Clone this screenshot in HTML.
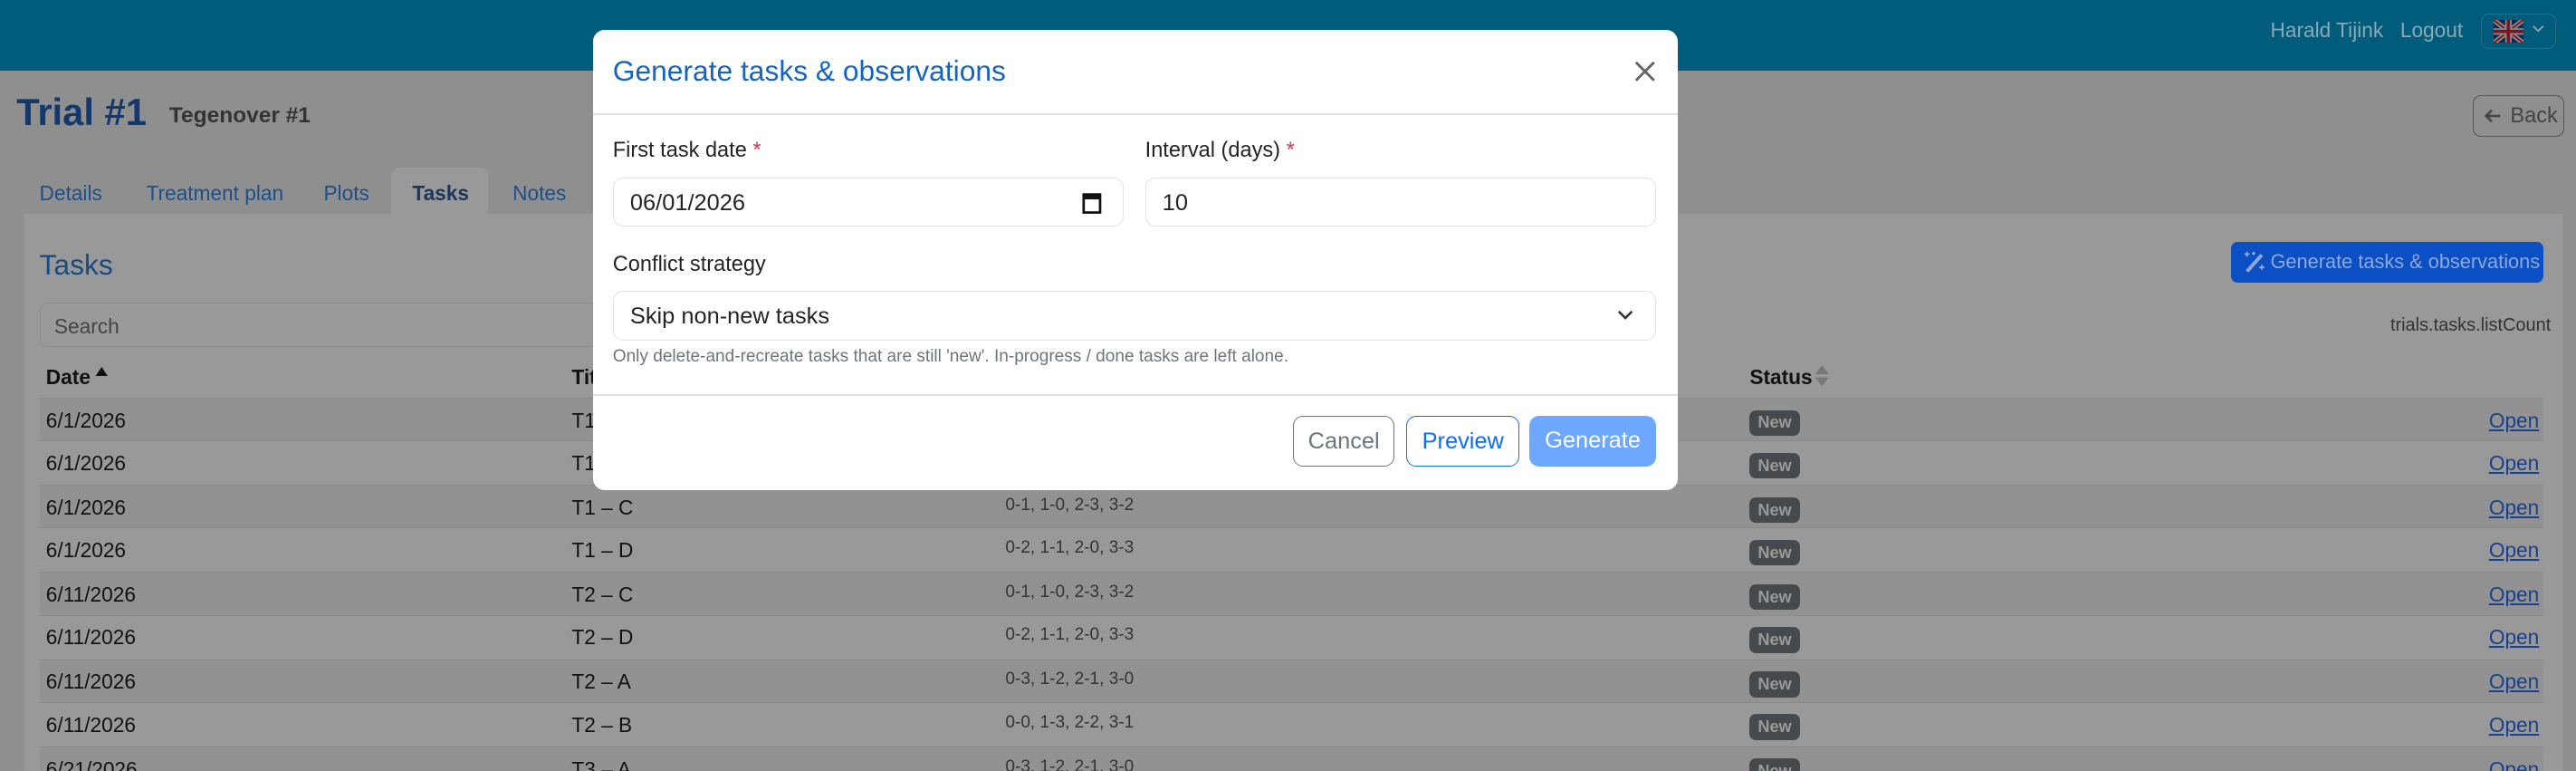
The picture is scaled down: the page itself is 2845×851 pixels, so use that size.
<!DOCTYPE html>
<html><head><meta charset="utf-8"><style>
html,body{margin:0;padding:0;overflow:hidden;background:#8f8f8f;width:2845px;height:851px}
#w{position:relative;width:1568px;height:469px;zoom:1.81441;font-family:"Liberation Sans",sans-serif;color:#111;overflow:hidden;background:#8f8f8f}
.a{position:absolute;white-space:nowrap}
.nav{left:0;top:0;width:1568px;height:43px;background:#005c7b}
.card{left:15px;top:130px;width:1545px;height:339px;background:#999}
.row{position:absolute;left:24px;width:1524px;height:26px;border-top:1px solid #8a8a8a;font-size:12.5px;overflow:hidden}
.row.d{background:#929292}
.row span{position:absolute;top:6px}
.badge{background:#454a4f;color:#999;font-size:10px;font-weight:bold;padding:2px 5px;border-radius:4px;top:7px!important}
.open{color:#1a3f8c;text-decoration:underline}
.m{left:361px;top:18px;width:660px;height:280px;background:#fff;border-radius:7px}
.inp{position:absolute;border:1px solid #dee2e6;border-radius:6px;height:30px;background:#fff;font-size:14px;color:#212529;box-sizing:border-box}
.lbl{position:absolute;font-size:13px;color:#212529}
.req{color:#dc3545}
.btn{position:absolute;top:235px;height:31px;border-radius:6px;font-size:14px;line-height:30px;text-align:center;box-sizing:border-box}
</style></head><body><div id="w">
<div class="a nav"></div>
<div class="a" style="left:1382px;top:11px;font-size:12.5px;color:#8aa9b6">Harald Tijink</div>
<div class="a" style="left:1461px;top:11px;font-size:12.5px;color:#8aa9b6">Logout</div>
<div class="a" style="left:1510px;top:8px;width:46px;height:22px;border:1px solid #2a6f88;border-radius:5px;box-sizing:border-box"></div>
<svg class="a" style="left:1518px;top:12px" width="18" height="14" viewBox="0 0 18 14"><rect width="18" height="14" fill="#0e2455"/><path d="M0 0L18 14M18 0L0 14" stroke="#888" stroke-width="3"/><path d="M0 0L18 14M18 0L0 14" stroke="#7a1520" stroke-width="1"/><path d="M9 0V14M0 7H18" stroke="#888" stroke-width="4"/><path d="M9 0V14M0 7H18" stroke="#7a1520" stroke-width="2"/></svg>
<svg class="a" style="left:1541px;top:15px" width="8" height="6" viewBox="0 0 8 6"><path d="M1 1L4 4L7 1" fill="none" stroke="#8aa9b6" stroke-width="1"/></svg>

<div class="a" style="left:10px;top:55px;font-size:23px;font-weight:bold;color:#12386e">Trial #1</div>
<div class="a" style="left:103px;top:63px;font-size:13.5px;font-weight:bold;color:#333">Tegenover #1</div>
<div class="a" style="left:1505px;top:58px;width:56px;height:25px;border:1px solid #555;border-radius:5px;box-sizing:border-box"></div>
<svg class="a" style="left:1512px;top:65px" width="11" height="11" viewBox="0 0 11 11"><path d="M10 5.5H1.5M5 2L1.5 5.5L5 9" fill="none" stroke="#444" stroke-width="1.4"/></svg>
<div class="a" style="left:1528px;top:63px;font-size:13px;color:#444">Back</div>
<div class="a" style="left:24px;top:110px;font-size:12.5px;color:#1d4e8a">Details</div>
<div class="a" style="left:89px;top:110px;font-size:12.5px;color:#1d4e8a">Treatment plan</div>
<div class="a" style="left:197px;top:110px;font-size:12.5px;color:#1d4e8a">Plots</div>
<div class="a" style="left:238px;top:102px;width:59px;height:30px;background:#999;border-radius:5px 5px 0 0"></div>
<div class="a" style="left:251px;top:110px;font-size:12.5px;font-weight:bold;color:#1a3659">Tasks</div>
<div class="a" style="left:312px;top:110px;font-size:12.5px;color:#1d4e8a">Notes</div>
<div class="a card"></div>
<div class="a" style="left:24px;top:151px;font-size:17.5px;color:#174b82">Tasks</div>
<div class="a" style="left:1358px;top:147px;width:190px;height:25px;background:#0b4fc5;border-radius:4px"></div>
<svg class="a" style="left:1366px;top:152px" width="13" height="14" viewBox="0 0 13 14"><path d="M2 13L11 3" stroke="#8fa8d8" stroke-width="2.2"/><path d="M2 1v3M0.5 2.5h3M11 9v3M9.5 10.5h3M6 1v2M5 2h2" stroke="#8fa8d8" stroke-width="1"/></svg>
<div class="a" style="left:1382px;top:152px;font-size:12px;color:#8fa8d8">Generate tasks &amp; observations</div>
<div class="a" style="left:24px;top:184px;width:500px;height:27px;border:1px solid #8c8c8c;border-radius:5px;box-sizing:border-box;background:#9a9a9a"></div>
<div class="a" style="left:33px;top:191px;font-size:12.5px;color:#444">Search</div>
<div class="a" style="left:1455px;top:192px;font-size:11px;color:#333">trials.tasks.listCount</div>
<div class="a" style="left:28px;top:222px;font-size:12.5px;font-weight:bold">Date</div>
<svg class="a" style="left:58px;top:223px" width="8" height="6" viewBox="0 0 8 6"><path d="M0 6L4 0L8 6Z" fill="#111"/></svg>
<div class="a" style="left:348px;top:222px;font-size:12.5px;font-weight:bold">Title</div>
<div class="a" style="left:1065px;top:222px;font-size:12.5px;font-weight:bold">Status</div>
<svg class="a" style="left:1105px;top:222px" width="8" height="13" viewBox="0 0 8 13"><path d="M0 5.5L4 0L8 5.5ZM0 7.5L4 13L8 7.5Z" fill="#777"/></svg>

<div class="row d" style="top:242px"><span style="left:4px">6/1/2026</span><span style="left:324px">T1 – A</span><span style="left:588px;font-size:10.5px;color:#333">0-3, 1-2, 2-1, 3-0</span><span class="badge" style="left:1041px">New</span><span class="open" style="left:1491px">Open</span></div>
<div class="row" style="top:268px"><span style="left:4px">6/1/2026</span><span style="left:324px">T1 – B</span><span style="left:588px;font-size:10.5px;color:#333">0-0, 1-3, 2-2, 3-1</span><span class="badge" style="left:1041px">New</span><span class="open" style="left:1491px">Open</span></div>
<div class="row d" style="top:295px"><span style="left:4px">6/1/2026</span><span style="left:324px">T1 – C</span><span style="left:588px;font-size:10.5px;color:#333">0-1, 1-0, 2-3, 3-2</span><span class="badge" style="left:1041px">New</span><span class="open" style="left:1491px">Open</span></div>
<div class="row" style="top:321px"><span style="left:4px">6/1/2026</span><span style="left:324px">T1 – D</span><span style="left:588px;font-size:10.5px;color:#333">0-2, 1-1, 2-0, 3-3</span><span class="badge" style="left:1041px">New</span><span class="open" style="left:1491px">Open</span></div>
<div class="row d" style="top:348px"><span style="left:4px">6/11/2026</span><span style="left:324px">T2 – C</span><span style="left:588px;font-size:10.5px;color:#333">0-1, 1-0, 2-3, 3-2</span><span class="badge" style="left:1041px">New</span><span class="open" style="left:1491px">Open</span></div>
<div class="row" style="top:374px"><span style="left:4px">6/11/2026</span><span style="left:324px">T2 – D</span><span style="left:588px;font-size:10.5px;color:#333">0-2, 1-1, 2-0, 3-3</span><span class="badge" style="left:1041px">New</span><span class="open" style="left:1491px">Open</span></div>
<div class="row d" style="top:401px"><span style="left:4px">6/11/2026</span><span style="left:324px">T2 – A</span><span style="left:588px;font-size:10.5px;color:#333">0-3, 1-2, 2-1, 3-0</span><span class="badge" style="left:1041px">New</span><span class="open" style="left:1491px">Open</span></div>
<div class="row" style="top:427px"><span style="left:4px">6/11/2026</span><span style="left:324px">T2 – B</span><span style="left:588px;font-size:10.5px;color:#333">0-0, 1-3, 2-2, 3-1</span><span class="badge" style="left:1041px">New</span><span class="open" style="left:1491px">Open</span></div>
<div class="row d" style="top:454px;height:15px"><span style="left:4px">6/21/2026</span><span style="left:324px">T3 – A</span><span style="left:588px;font-size:10.5px;color:#333">0-3, 1-2, 2-1, 3-0</span><span class="badge" style="left:1041px">New</span><span class="open" style="left:1491px">Open</span></div>

<div class="a m">
 <div class="a" style="left:12px;top:15px;font-size:17.5px;color:#1565c0">Generate tasks &amp; observations</div>
 <svg class="a" style="left:634px;top:19px" width="13" height="13" viewBox="0 0 13 13"><path d="M1 1L12 12M12 1L1 12" stroke="#666" stroke-width="1.6"/></svg>
 <div class="a" style="left:0;top:51px;width:660px;height:1px;background:#dee2e6"></div>
 <div class="lbl" style="left:12px;top:66px">First task date <span class="req">*</span></div>
 <div class="lbl" style="left:336px;top:66px">Interval (days) <span class="req">*</span></div>
 <div class="inp" style="left:12px;top:90px;width:311px"><span class="a" style="left:10px;top:7px">06/01/2026</span>
  <svg class="a" style="left:285px;top:8px" width="12" height="14" viewBox="0 0 12 14"><rect x="1" y="2" width="10" height="11" fill="none" stroke="#111" stroke-width="1.5"/><rect x="1" y="2" width="10" height="3" fill="#111"/></svg></div>
 <div class="inp" style="left:336px;top:90px;width:311px"><span class="a" style="left:10px;top:7px">10</span></div>
 <div class="lbl" style="left:12px;top:135px">Conflict strategy</div>
 <div class="inp" style="left:12px;top:159px;width:635px"><span class="a" style="left:10px;top:7px">Skip non-new tasks</span>
  <svg class="a" style="left:611px;top:11px" width="10" height="7" viewBox="0 0 10 7"><path d="M1 1L5 5L9 1" fill="none" stroke="#333" stroke-width="1.4"/></svg></div>
 <div class="a" style="left:12px;top:193px;font-size:10.5px;color:#6c757d">Only delete-and-recreate tasks that are still 'new'. In-progress / done tasks are left alone.</div>
 <div class="a" style="left:0;top:222px;width:660px;height:1px;background:#dee2e6"></div>
 <div class="btn" style="left:426px;width:62px;border:1px solid #6c757d;color:#6c757d">Cancel</div>
 <div class="btn" style="left:495px;width:69px;border:1px solid #0d6efd;color:#0d6efd">Preview</div>
 <div class="btn" style="left:570px;width:77px;background:#6ea8fe;color:#fff">Generate</div>
</div>
</div></body></html>
